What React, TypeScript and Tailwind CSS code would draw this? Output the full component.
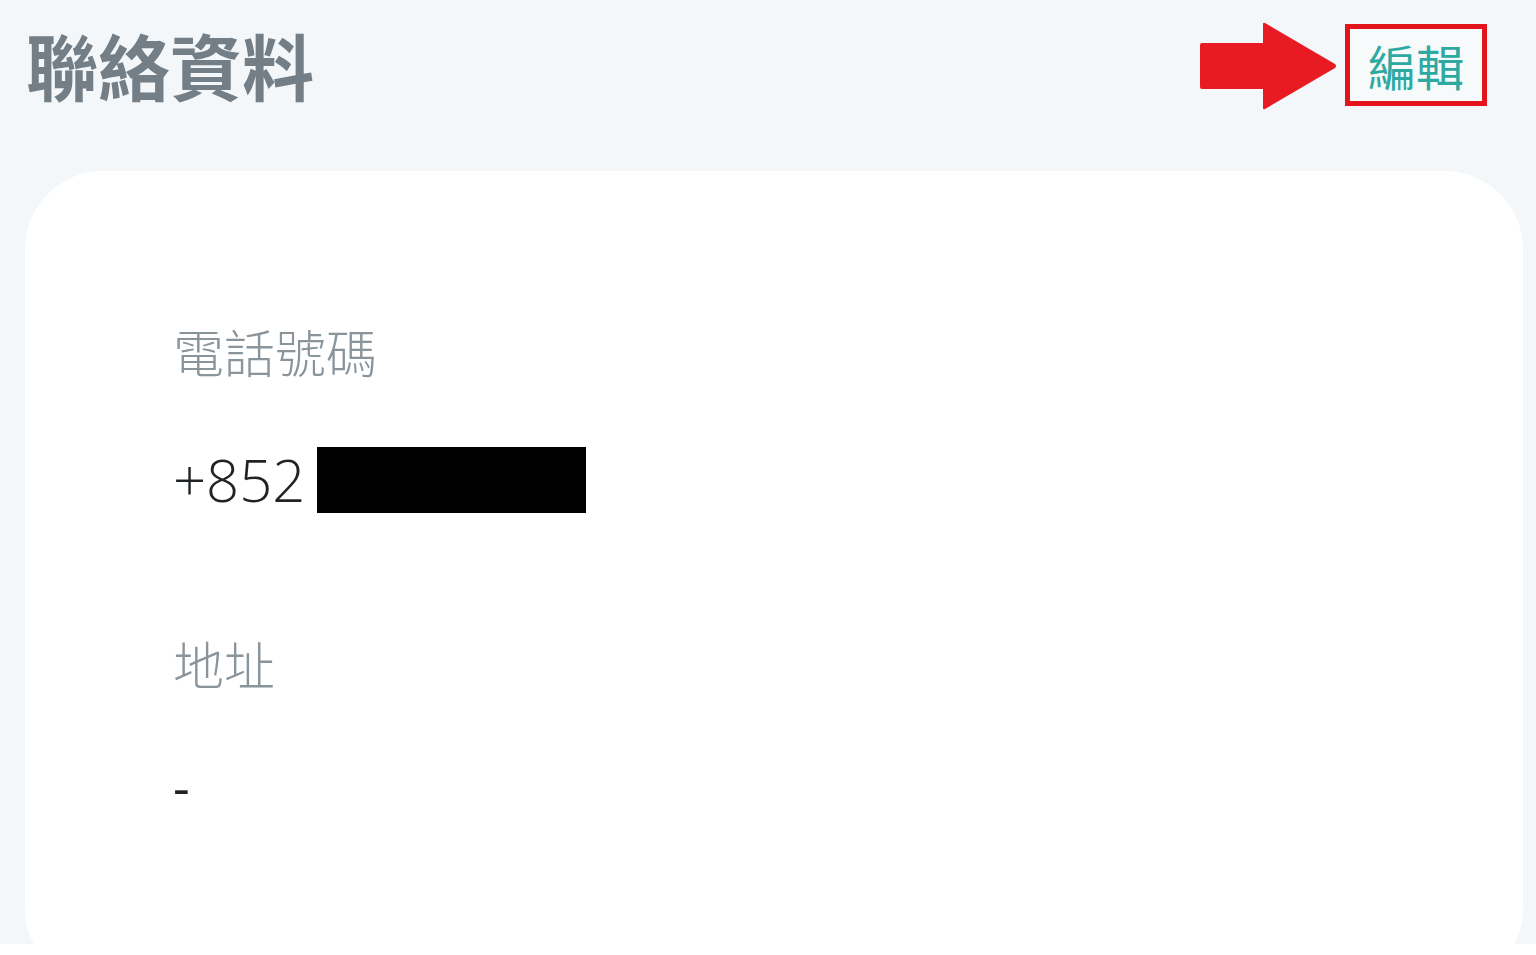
import React from "react";

const cjk = { fontFamily: '"Noto Sans CJK TC", "Noto Sans", sans-serif' };
const latin = { fontFamily: '"Open Sans", "Noto Sans CJK TC", sans-serif' };

export default function App() {
  return (
    <div className="w-[1536px] h-[955px] overflow-hidden bg-[#f4f7f9] flex flex-col">
      <div className="flex items-start h-[171px] shrink-0 pl-[26px] pr-[49px]">
        <h1 className="mt-[24px] text-[72px] leading-[80px] font-bold text-[#737e86]" style={cjk}>
          聯絡資料
        </h1>
        <div className="flex-1" />
        <svg width="139" height="90" viewBox="0 0 139 90" className="mt-[21px] mr-[7px]">
          <path
            d="M3 22 L64 22 L64 3 Q64 1 66 2 L136 43 Q138 45 136 47 L66 88 Q64 89 64 87 L64 68 L3 68 Q1 68 1 66 L1 24 Q1 22 3 22 Z"
            fill="#e81b23"
          />
        </svg>
        <button
          className="mt-[24px] w-[142px] h-[82px] border-[5px] border-[#e3141c] bg-[#f7fafa] flex items-center justify-center text-[48px] leading-none text-[#2ea9a2]"
          style={cjk}
        >
          編輯
        </button>
      </div>
      <div className="flex-1 overflow-hidden">
        <div className="ml-[25px] mr-[13px] h-[815px] bg-white rounded-[78px] pl-[148px] pt-[150px]">
          <div className="text-[51px] leading-[60px] text-[#8a949b] font-light" style={cjk}>
            電話號碼
          </div>
          <div className="mt-[66px] flex items-center h-[66px]">
            <span className="text-[58px] leading-none font-light text-[#1f2326]" style={latin}>
              +852
            </span>
            <span className="ml-[12px] w-[269px] h-[66px] bg-black" />
          </div>
          <div className="mt-[120px] text-[51px] leading-[60px] text-[#8a949b] font-light" style={cjk}>
            地址
          </div>
          <div className="mt-[67px] text-[52px] leading-none text-[#1f2326]" style={latin}>
            -
          </div>
        </div>
      </div>
      <div className="h-[11px] shrink-0 bg-white" />
    </div>
  );
}
